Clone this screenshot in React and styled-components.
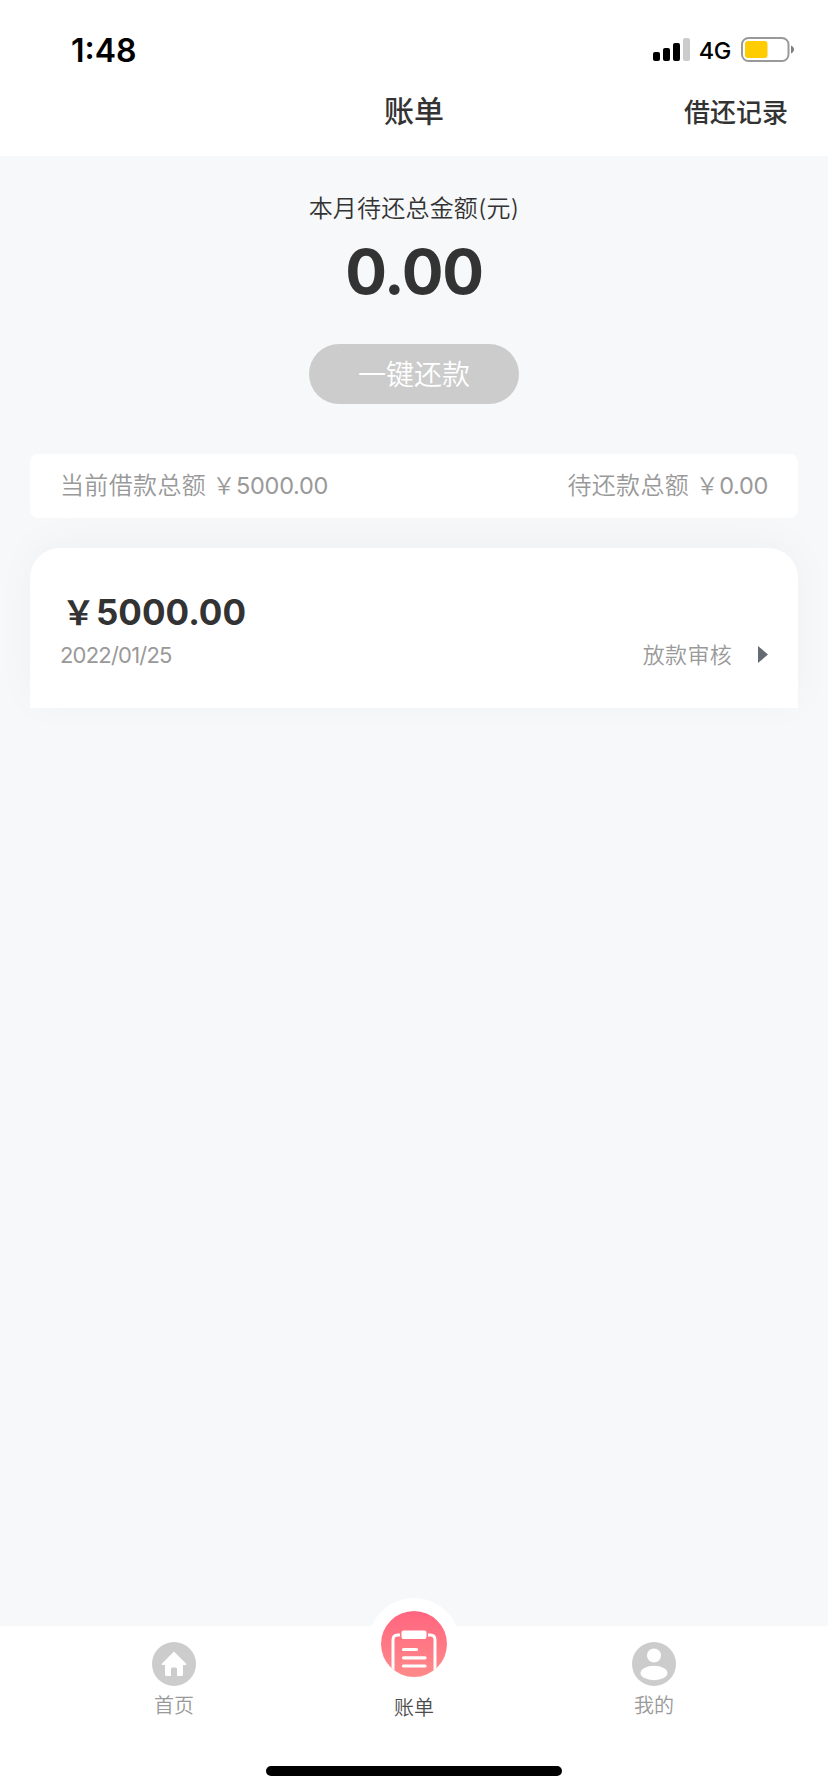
import React from 'react'
import styled, { createGlobalStyle } from 'styled-components'

const dark = '#333333'
const gray = '#999999'
const lightGray = '#cccccc'
const background = '#f7f8fa'

const GlobalStyle = createGlobalStyle`
  body {
    margin: 0;
    background: ${background};
    font-family: Inter, 'Noto Sans CJK SC', sans-serif;
    color: ${dark};
  }
`
const Screen = styled.div`
  display: flex;
  flex-direction: column;
  height: 1792px;
  width: 828px;
  overflow: hidden;
`
const Header = styled.header`
  background: white;
  height: 156px;
  flex: none;
`
const StatusBar = styled.div`
  display: flex;
  align-items: center;
  height: 87px;
  padding: 12px 33px 0 71px;
  box-sizing: border-box;
  color: black;
`
const Time = styled.div`
  font-size: 32px;
  font-weight: 600;
  padding-top: 1px;
  flex: 1;
`
const Network = styled.div`
  font-size: 23.5px;
  font-weight: 500;
  letter-spacing: -0.4px;
  margin: 2px 10px 0 8px;
`
const NavBar = styled.div`
  display: grid;
  grid-template-columns: 1fr auto 1fr;
  align-items: center;
  height: 45px;
  padding: 0 40px;
`
const Title = styled.h1`
  grid-column: 2;
  margin: 0;
  padding-top: 3px;
  font-size: 30px;
  font-weight: 500;
  line-height: 43px;
`
const Records = styled.div`
  justify-self: end;
  font-size: 26px;
  font-weight: 500;
`
const Main = styled.main`
  flex: 1;
  padding: 37px 30px 0;
`
const Due = styled.section`
  display: flex;
  flex-direction: column;
  align-items: center;
`
const DueLabel = styled.div`
  font-size: 24px;
  font-weight: 350;
  line-height: 32px;
  letter-spacing: 0.2px;
`
const DueAmount = styled.div`
  font-size: 62px;
  font-weight: 700;
  line-height: 76px;
  letter-spacing: -1.3px;
  margin-top: 9px;
`
const PayButton = styled.button`
  width: 210px;
  height: 60px;
  margin: 34px 0 50px;
  padding: 0 0 3px;
  border: none;
  border-radius: 30px;
  background: ${lightGray};
  color: white;
  font-family: inherit;
  font-size: 28px;
  font-weight: 350;
`
const Summary = styled.section`
  position: relative;
  z-index: 1;
  display: flex;
  justify-content: space-between;
  height: 64px;
  padding: 0 30px;
  border-radius: 8px;
  background: white;
  color: ${gray};
  font-size: 24px;
  font-weight: 350;
  line-height: 63px;
`
const SummaryLabel = styled.span`
  letter-spacing: 0.35px;
  margin-right: 6px;
`
const SummaryYen = styled.span`
  font-size: 23px;
  margin: 0 0.5px;
`
const Amount = styled.span`
  font-size: 23.5px;
  font-weight: 400;
  letter-spacing: -0.3px;
`
const Card = styled.section`
  display: flex;
  flex-direction: column;
  height: 160px;
  margin-top: 30px;
  padding: 42px 30px 0;
  box-sizing: border-box;
  border-radius: 30px 30px 0 0;
  background: white;
  box-shadow: 0 -6px 40px rgba(0, 0, 0, 0.035);
`
const CardAmount = styled.div`
  height: 44px;
  font-size: 35px;
  font-weight: 700;
  line-height: 44px;
`
const CardYen = styled.span`
  font-size: 33px;
  margin: 0 1px 0 2px;
`
const CardRow = styled.div`
  display: flex;
  align-items: center;
  height: 41px;
  color: ${gray};
`
const LoanDate = styled.div`
  flex: 1;
  font-size: 22px;
  letter-spacing: -0.8px;
`
const Status = styled.div`
  font-size: 22px;
  font-weight: 350;
  letter-spacing: 0.3px;
  margin: -3px 25px 0 0;
`
const TabBar = styled.nav`
  display: grid;
  grid-template-columns: repeat(3, 240px);
  justify-content: center;
  height: 140px;
  background: white;
`
const Tab = styled.div`
  position: relative;
  display: flex;
  flex-direction: column;
  align-items: center;
  padding-top: 16px;
  font-size: 20px;
  font-weight: 350;
  line-height: 28px;
  color: ${p => (p.$active ? '#4d4d4d' : gray)};
`
const TabLabel = styled.div`
  margin-top: ${p => (p.$active ? 52 : 6)}px;
  z-index: 1;
`
const Bump = styled.div`
  position: absolute;
  top: -28px;
  display: flex;
  align-items: center;
  justify-content: center;
  width: 92px;
  height: 92px;
  border-radius: 50%;
  background: white;
`
const HomeArea = styled.div`
  display: flex;
  justify-content: center;
  height: 26px;
  flex: none;
  background: white;
`
const HomeIndicator = styled.div`
  width: 296px;
  height: 10px;
  border-radius: 5px;
  background: black;
`

const Signal = () => (
  <svg width='38' height='24' viewBox='0 0 38 24'>
    <rect x='0' y='14' width='7' height='9' rx='2' />
    <rect x='10' y='10' width='7' height='13' rx='2' />
    <rect x='20' y='5' width='7' height='18' rx='2' />
    <rect x='30' y='0' width='7' height='23' rx='2' fill='#cccccc' />
  </svg>
)

const Battery = () => (
  <svg width='54' height='26' viewBox='0 0 54 26'>
    <rect
      x='1'
      y='1'
      width='46.5'
      height='23'
      rx='6.5'
      fill='none'
      stroke='#999999'
      strokeWidth='2'
    />
    <rect x='4' y='4' width='22.5' height='17' rx='3' fill='#ffcc00' />
    <path d='M50 8.5c4 1.5 4 6.5 0 8z' fill='#808080' />
  </svg>
)

const Arrow = () => (
  <svg width='11' height='18' viewBox='0 0 11 18' overflow='visible'>
    <path d='M1 0V17L11 8.5z' fill='#666a73' />
  </svg>
)

const HomeIcon = () => (
  <svg width='44' height='44' viewBox='0 0 44 44'>
    <circle cx='22' cy='22' r='22' fill={lightGray} />
    <path
      d='M22 9.5L34 21.5Q35 23 33 23H31V32.5Q31 34 29.5 34H25V27Q25 25.5 23.5 25.5H20.5Q19 25.5 19 27V34H14.5Q13 34 13 32.5V23H11Q9 23 10 21.5z'
      fill='white'
    />
  </svg>
)

const UserIcon = () => (
  <svg width='44' height='44' viewBox='0 0 44 44'>
    <circle cx='22' cy='22' r='22' fill={lightGray} />
    <circle cx='22' cy='13.5' r='7' fill='white' />
    <ellipse cx='22' cy='31' rx='13.5' ry='7.2' fill='white' />
  </svg>
)

const BillIcon = () => (
  <svg width='66' height='66' viewBox='0 0 66 66'>
    <defs>
      <linearGradient id='bill' x1='0' y1='0' x2='0' y2='1'>
        <stop offset='0' stopColor='#ff657f' />
        <stop offset='1' stopColor='#ff8a8a' />
      </linearGradient>
      <clipPath id='disc'>
        <circle cx='33' cy='33' r='33' />
      </clipPath>
    </defs>
    <circle cx='33' cy='33' r='33' fill='url(#bill)' />
    <g clipPath='url(#disc)'>
      <path
        d='M19 24H16.5Q12 24 12 29V66M47 24H49.5Q54 24 54 29V66'
        fill='none'
        stroke='white'
        strokeWidth='3'
      />
      <rect x='20.5' y='19.5' width='25' height='8.5' rx='2' fill='white' />
      <path
        d='M22.5 38.5H35.5M22.5 46.8H44M22.5 55H44'
        stroke='white'
        strokeWidth='3.2'
        strokeLinecap='round'
      />
    </g>
  </svg>
)

const SummaryItem = ({ label, amount }) => (
  <div>
    <SummaryLabel>{label}</SummaryLabel>
    <SummaryYen>{'\uffe5'}</SummaryYen>
    <Amount>{amount}</Amount>
  </div>
)

const App = () => (
  <>
    <GlobalStyle />
    <Screen>
      <Header>
        <StatusBar>
          <Time>1:48</Time>
          <Signal />
          <Network>4G</Network>
          <Battery />
        </StatusBar>
        <NavBar>
          <Title>账单</Title>
          <Records>借还记录</Records>
        </NavBar>
      </Header>
      <Main>
        <Due>
          <DueLabel>本月待还总金额(元)</DueLabel>
          <DueAmount>0.00</DueAmount>
          <PayButton>一键还款</PayButton>
        </Due>
        <Summary>
          <SummaryItem label='当前借款总额' amount='5000.00' />
          <SummaryItem label='待还款总额' amount='0.00' />
        </Summary>
        <Card>
          <CardAmount>
            <CardYen>{'\uffe5'}</CardYen>
            5000.00
          </CardAmount>
          <CardRow>
            <LoanDate>2022/01/25</LoanDate>
            <Status>放款审核</Status>
            <Arrow />
          </CardRow>
        </Card>
      </Main>
      <TabBar>
        <Tab>
          <HomeIcon />
          <TabLabel>首页</TabLabel>
        </Tab>
        <Tab $active>
          <Bump>
            <BillIcon />
          </Bump>
          <TabLabel $active>账单</TabLabel>
        </Tab>
        <Tab>
          <UserIcon />
          <TabLabel>我的</TabLabel>
        </Tab>
      </TabBar>
      <HomeArea>
        <HomeIndicator />
      </HomeArea>
    </Screen>
  </>
)

export default App
